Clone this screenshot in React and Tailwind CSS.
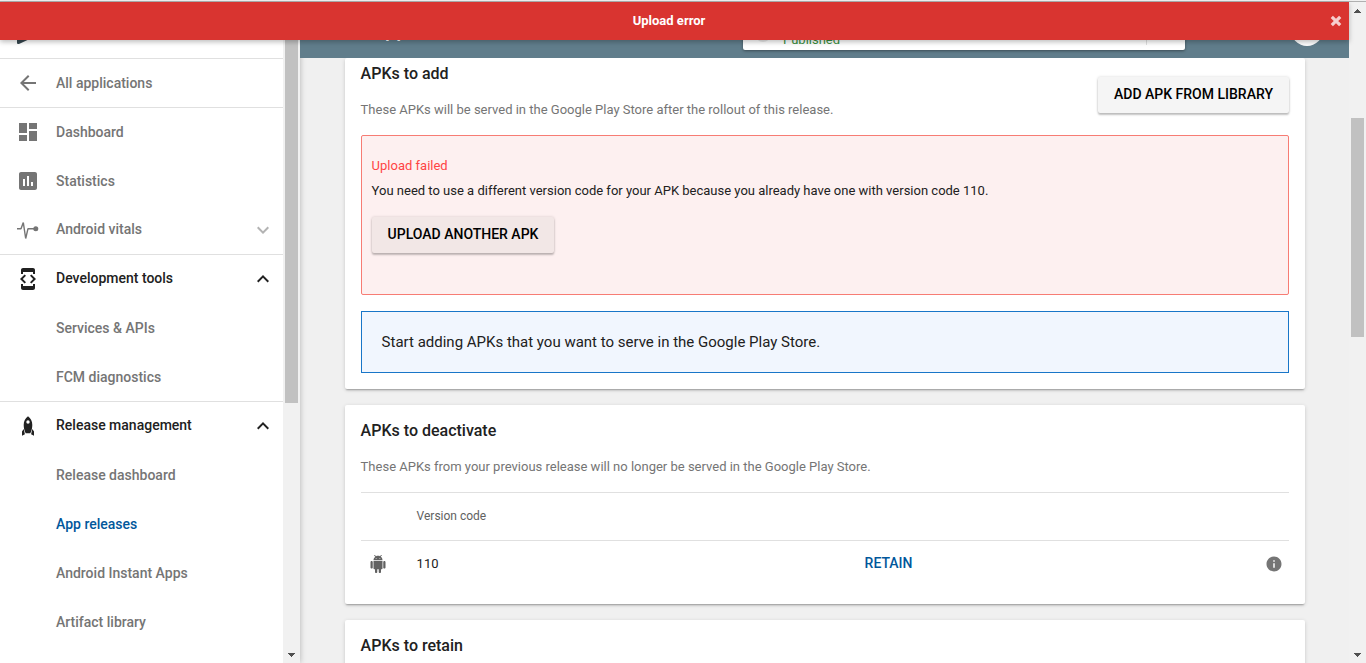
import React from "react";

const CARD =
  "rounded-[2px] bg-white shadow-[0_1px_4px_rgba(0,0,0,0.14),0_2px_2px_-1px_rgba(0,0,0,0.3)]";
const BUTTON =
  "flex h-9 items-center justify-center rounded-[2px] pb-[2px] text-[14px] font-medium text-black shadow-[0_2px_2px_0_rgba(0,0,0,0.22),0_0_3px_0_rgba(0,0,0,0.16)]";

function ArrowBack() {
  return (
    <svg width="24" height="24" viewBox="0 0 24 24" fill="#757575">
      <path d="M20 11H7.83l5.59-5.59L12 4l-8 8 8 8 1.41-1.41L7.83 13H20v-2z" />
    </svg>
  );
}

function DashboardIcon() {
  return (
    <svg width="24" height="24" viewBox="0 0 24 24" fill="#757575">
      <path d="M3 13h8V3H3v10zm0 8h8v-6H3v6zm10 0h8V11h-8v10zm0-18v6h8V3h-8z" />
    </svg>
  );
}

function StatisticsIcon() {
  return (
    <svg width="24" height="24" viewBox="0 0 24 24" fill="#757575">
      <path d="M19 3H5c-1.1 0-2 .9-2 2v14c0 1.1.9 2 2 2h14c1.1 0 2-.9 2-2V5c0-1.1-.9-2-2-2zM9 17H7v-7h2v7zm4 0h-2V7h2v10zm4 0h-2v-4h2v4z" />
    </svg>
  );
}

function VitalsIcon() {
  return (
    <svg width="24" height="24" viewBox="0 0 24 24" fill="none" className="overflow-visible">
      <path
        d="M1 10.700h4L7.300 4.500 9.700 20.500 12 10.700h8"
        stroke="#757575"
        strokeWidth="1.400"
        strokeLinejoin="bevel"
      />
      <circle cx="19.800" cy="10.700" r="2.500" fill="#757575" />
    </svg>
  );
}

function DevToolsIcon() {
  return (
    <svg width="24" height="24" viewBox="0 0 24 24" fill="#212121">
      <path d="M7 5h10v2h2V3c0-1.1-.9-1.99-2-1.99L7 1c-1.1 0-2 .9-2 2v4h2V5zm8.41 11.59L20 12l-4.59-4.59L14 8.83 17.17 12 14 15.17l1.41 1.42zM10 15.17L6.83 12 10 8.83 8.59 7.41 4 12l4.59 4.59L10 15.17zM17 19H7v-2H5v4c0 1.1.9 2 2 2h10c1.1 0 2-.9 2-2v-4h-2v2z" />
    </svg>
  );
}

function RocketIcon() {
  return (
    <svg width="24" height="24" viewBox="0 0 24 24" fill="#212121">
      <path
        fillRule="evenodd"
        d="M12 2.2C9.200 4.300 7.700 7.200 7.700 11c0 3.200.8 5.900 2 8.300h4.600c1.200-2.400 2-5.100 2-8.300 0-3.800-1.500-6.700-4.300-8.800zM12 6.300a1.700 1.700 0 1 1 0 3.400 1.700 1.700 0 0 1 0-3.400z"
      />
      <path d="M7.700 15L6 17.500v4.300l2.900-1.600zM16.300 15L18 17.500v4.300l-2.900-1.600z" />
    </svg>
  );
}

function AndroidIcon() {
  return (
    <svg width="18" height="18" viewBox="0 0 24 24" fill="#616161" className="mb-px">
      <path d="M6 18c0 .55.45 1 1 1h1v3.500c0 .83.67 1.500 1.500 1.500s1.500-.67 1.500-1.500V19h2v3.500c0 .83.67 1.500 1.500 1.500s1.500-.67 1.500-1.500V19h1c.55 0 1-.45 1-1V8H6v10zM3.500 8C2.670 8 2 8.670 2 9.500v7c0 .83.67 1.500 1.500 1.500S5 17.330 5 16.500v-7C5 8.670 4.330 8 3.500 8zm17 0c-.83 0-1.500.67-1.500 1.500v7c0 .83.67 1.500 1.500 1.500s1.500-.67 1.500-1.500v-7c0-.83-.67-1.500-1.500-1.500zm-4.970-5.840l1.300-1.300c.2-.2.2-.51 0-.71-.2-.2-.51-.2-.71 0l-1.480 1.480C13.850 1.230 12.950 1 12 1c-.96 0-1.860.23-2.660.63L7.850.15c-.2-.2-.51-.2-.71 0-.2.2-.2.510 0 .71l1.310 1.310C6.970 3.260 6 5.010 6 7h12c0-1.990-.97-3.750-2.470-4.840zM10 5H9V4h1v1zm5 0h-1V4h1v1z" />
    </svg>
  );
}

function InfoIcon() {
  return (
    <svg width="18" height="18" viewBox="0 0 24 24" fill="#757575" className="mb-[2px]">
      <path d="M12 2C6.480 2 2 6.480 2 12s4.480 10 10 10 10-4.480 10-10S17.520 2 12 2zm1 15h-2v-6h2v6zm0-8h-2V7h2v2z" />
    </svg>
  );
}

function Chevron({ open }) {
  return (
    <svg width="24" height="24" viewBox="0 0 24 24" fill={open ? "#212121" : "#b3b3b3"}>
      {open ? (
        <path d="M12 8l-6 6 1.410 1.410L12 10.830l4.590 4.580L18 14z" />
      ) : (
        <path d="M16.590 8.590L12 13.170 7.410 8.590 6 10l6 6 6-6z" />
      )}
    </svg>
  );
}

function Triangle({ up }) {
  return (
    <svg width="7" height="4" viewBox="0 0 7 4" fill="#505050" shapeRendering="crispEdges">
      {up ? <path d="M3 0h1v1h1v1h1v1h1v1H0V3h1V2h1V1h1z" /> : <path d="M0 0h7v1H6v1H5v1H4v1H3V3H2V2H1V1H0z" />}
    </svg>
  );
}

function NavItem({ icon, label, tone, chevron, height, nudge }) {
  return (
    <div className={`flex shrink-0 items-center pr-2 pl-4 ${height || "h-[49px]"}`}>
      <div className="flex h-6 w-6 shrink-0">{icon}</div>
      <span className={`ml-4 flex-1 text-[14px] leading-5 font-medium ${tone || "text-[#757575]"} ${nudge || ""}`}>
        {label}
      </span>
      {chevron && <Chevron open={chevron === "open"} />}
    </div>
  );
}

function Rule() {
  return <div className="h-px shrink-0 bg-[#e0e0e0]" />;
}

function Sidebar() {
  return (
    <nav className="flex w-[283px] shrink-0 flex-col overflow-hidden bg-white">
      <div className="h-[18px] shrink-0 pl-[17px]">
        <svg width="11" height="4" viewBox="0 0 11 4">
          <path d="M0 0h10.500L2.500 3.700Q0 4.500 0 3z" fill="#37474f" />
        </svg>
      </div>
      <Rule />
      <NavItem icon={<ArrowBack />} label="All applications" height="h-12" />
      <Rule />
      <NavItem icon={<DashboardIcon />} label="Dashboard" height="h-12" />
      <div className="h-px shrink-0" />
      <NavItem icon={<StatisticsIcon />} label="Statistics" height="h-12" />
      <div className="h-px shrink-0" />
      <NavItem icon={<VitalsIcon />} label="Android vitals" chevron="closed" height="h-12" nudge="pb-[2px]" />
      <Rule />
      <NavItem icon={<DevToolsIcon />} label="Development tools" tone="text-[#212121]" chevron="open" height="h-12" nudge="pb-[2px]" />
      <NavItem label="Services & APIs" />
      <NavItem label="FCM diagnostics" />
      <Rule />
      <NavItem icon={<RocketIcon />} label="Release management" tone="text-[#212121]" chevron="open" height="h-12" nudge="pb-[2px]" />
      <NavItem label="Release dashboard" />
      <NavItem label="App releases" tone="text-[#01579b]" />
      <NavItem label="Android Instant Apps" />
      <NavItem label="Artifact library" />
    </nav>
  );
}

function Header() {
  return (
    <header className="flex h-[18px] shrink-0 items-start overflow-hidden bg-[#607d8b]">
      <span className="-mt-[22px] ml-[72px] w-[371px] text-[20px] leading-6 font-medium text-white">App releases</span>
      <div className="-mt-[30px] flex h-10 w-[442px] items-end rounded-[2px] bg-white shadow-[0_1px_3px_rgba(0,0,0,0.4)]">
        <div className="mb-[8px] ml-[12px] h-4 w-4 rounded-full bg-[#e8e8e8]" />
        <span className="mb-[2px] ml-[12px] flex-1 text-[13px] leading-4 text-[#388e3c]">Published</span>
        <div className="mr-[38px] mb-[5px] h-6 w-px bg-[#e0e0e0]" />
      </div>
      <div className="-mt-[26px] ml-[106px] h-8 w-8 rounded-full bg-white" />
    </header>
  );
}

export default function App() {
  return (
    <div className="flex h-[663px] w-[1366px] flex-col overflow-hidden bg-[#f0f0f0] font-[Roboto,sans-serif]">
      <div className="h-[2px] shrink-0 border-b border-[#b0b0b0] bg-[#f1f1f1]" />
      <div className="flex min-h-0 flex-1">
        <div className="flex w-[1349px] shrink-0 flex-col">
          <div className="relative z-10 flex h-[38px] shrink-0 items-center bg-[#d93430] pr-[7px] pl-[8px] shadow-[0_2px_5px_rgba(0,0,0,0.26)]">
            <span className="flex-1 text-center text-[13px] leading-5 font-bold text-white">Upload error</span>
            <svg width="12" height="12" viewBox="0 0 12 12">
              <path d="M1.800 1.800l8.400 8.400M10.200 1.800l-8.400 8.400" stroke="#f6cfce" strokeWidth="3.200" />
            </svg>
          </div>
          <div className="flex min-h-0 flex-1">
            <div className="flex shrink-0 shadow-[0_0_6px_rgba(0,0,0,0.26)]">
              <Sidebar />
              <div className="flex w-[17px] flex-col items-center justify-between bg-[#f1f1f1] pb-[6px]">
                <div className="h-[363px] w-[13px] bg-[#c1c1c1]" />
                <Triangle />
              </div>
            </div>
            <div className="relative flex min-w-0 flex-1 flex-col">
              <Header />
              <main className="flex min-h-0 flex-1 flex-col overflow-hidden pr-[44px] pl-[45px]">
                <section className={`${CARD} h-[331px] shrink-0 px-4`}>
                  <div className="flex h-[77px] justify-between">
                    <div className="-ml-[0.4px] pt-1">
                      <h2 className="text-[16px] leading-6 font-medium text-[#212121]">APKs to add</h2>
                      <p className="mt-[14px] text-[13px] leading-5 text-[#757575]">
                        These APKs will be served in the Google Play Store after the rollout of this release.
                      </p>
                    </div>
                    <button className={`${BUTTON} mt-[19px] w-[191px] bg-[#f5f5f5]`}>ADD APK FROM LIBRARY</button>
                  </div>
                  <div className="h-40 rounded-[2px] border border-[#f77c74] bg-[#fdf0f0] px-[10px] pt-5">
                    <p className="-ml-[0.4px] text-[13px] leading-5 text-[#ff4444]">Upload failed</p>
                    <p className="mt-[5px] -ml-[0.4px] text-[13px] leading-5 text-[#212121]">
                      You need to use a different version code for your APK because you already have one with version code 110.
                    </p>
                    <button className={`${BUTTON} mt-4 w-[182px] bg-[#f2e7e6]`}>UPLOAD ANOTHER APK</button>
                  </div>
                  <div className="mt-4 flex h-[62px] items-center border border-[#1976c8] bg-[#f1f6fe] px-[19.6px] text-[15px] text-[#212121]">
                    Start adding APKs that you want to serve in the Google Play Store.
                  </div>
                </section>

                <section className={`${CARD} mt-4 h-[199px] shrink-0 px-4 pt-[14px]`}>
                  <h2 className="-ml-[0.4px] text-[16px] leading-6 font-medium text-[#212121]">APKs to deactivate</h2>
                  <p className="mt-[14px] -ml-[0.4px] text-[13px] leading-5 text-[#757575]">
                    These APKs from your previous release will no longer be served in the Google Play Store.
                  </p>
                  <div className="mt-[15px] h-12 border-t border-[#e0e0e0] pt-[13px] pl-[55.600px] text-[12px] leading-5 text-[#616161]">
                    Version code
                  </div>
                  <div className="flex h-12 items-center border-t border-[#e0e0e0] pr-[6px] pl-2">
                    <AndroidIcon />
                    <span className="ml-[29.600px] w-[448px] pb-[2px] text-[13px] leading-5 text-[#212121]">110</span>
                    <span className="flex-1 pb-1 text-[14px] leading-5 font-medium text-[#01579b]">RETAIN</span>
                    <InfoIcon />
                  </div>
                </section>

                <section className={`${CARD} mt-4 h-[120px] shrink-0 px-4 pt-[14px]`}>
                  <h2 className="-ml-[0.4px] text-[16px] leading-6 font-medium text-[#212121]">APKs to retain</h2>
                </section>
              </main>
            </div>
          </div>
        </div>
        <div className="flex w-[17px] flex-col items-center bg-[#f1f1f1] pt-[7px] pb-[6px]">
          <Triangle up />
          <div className="mt-[105px] mr-px h-[219px] w-[13px] bg-[#c1c1c1]" />
          <div className="flex-1" />
          <Triangle />
        </div>
      </div>
    </div>
  );
}
